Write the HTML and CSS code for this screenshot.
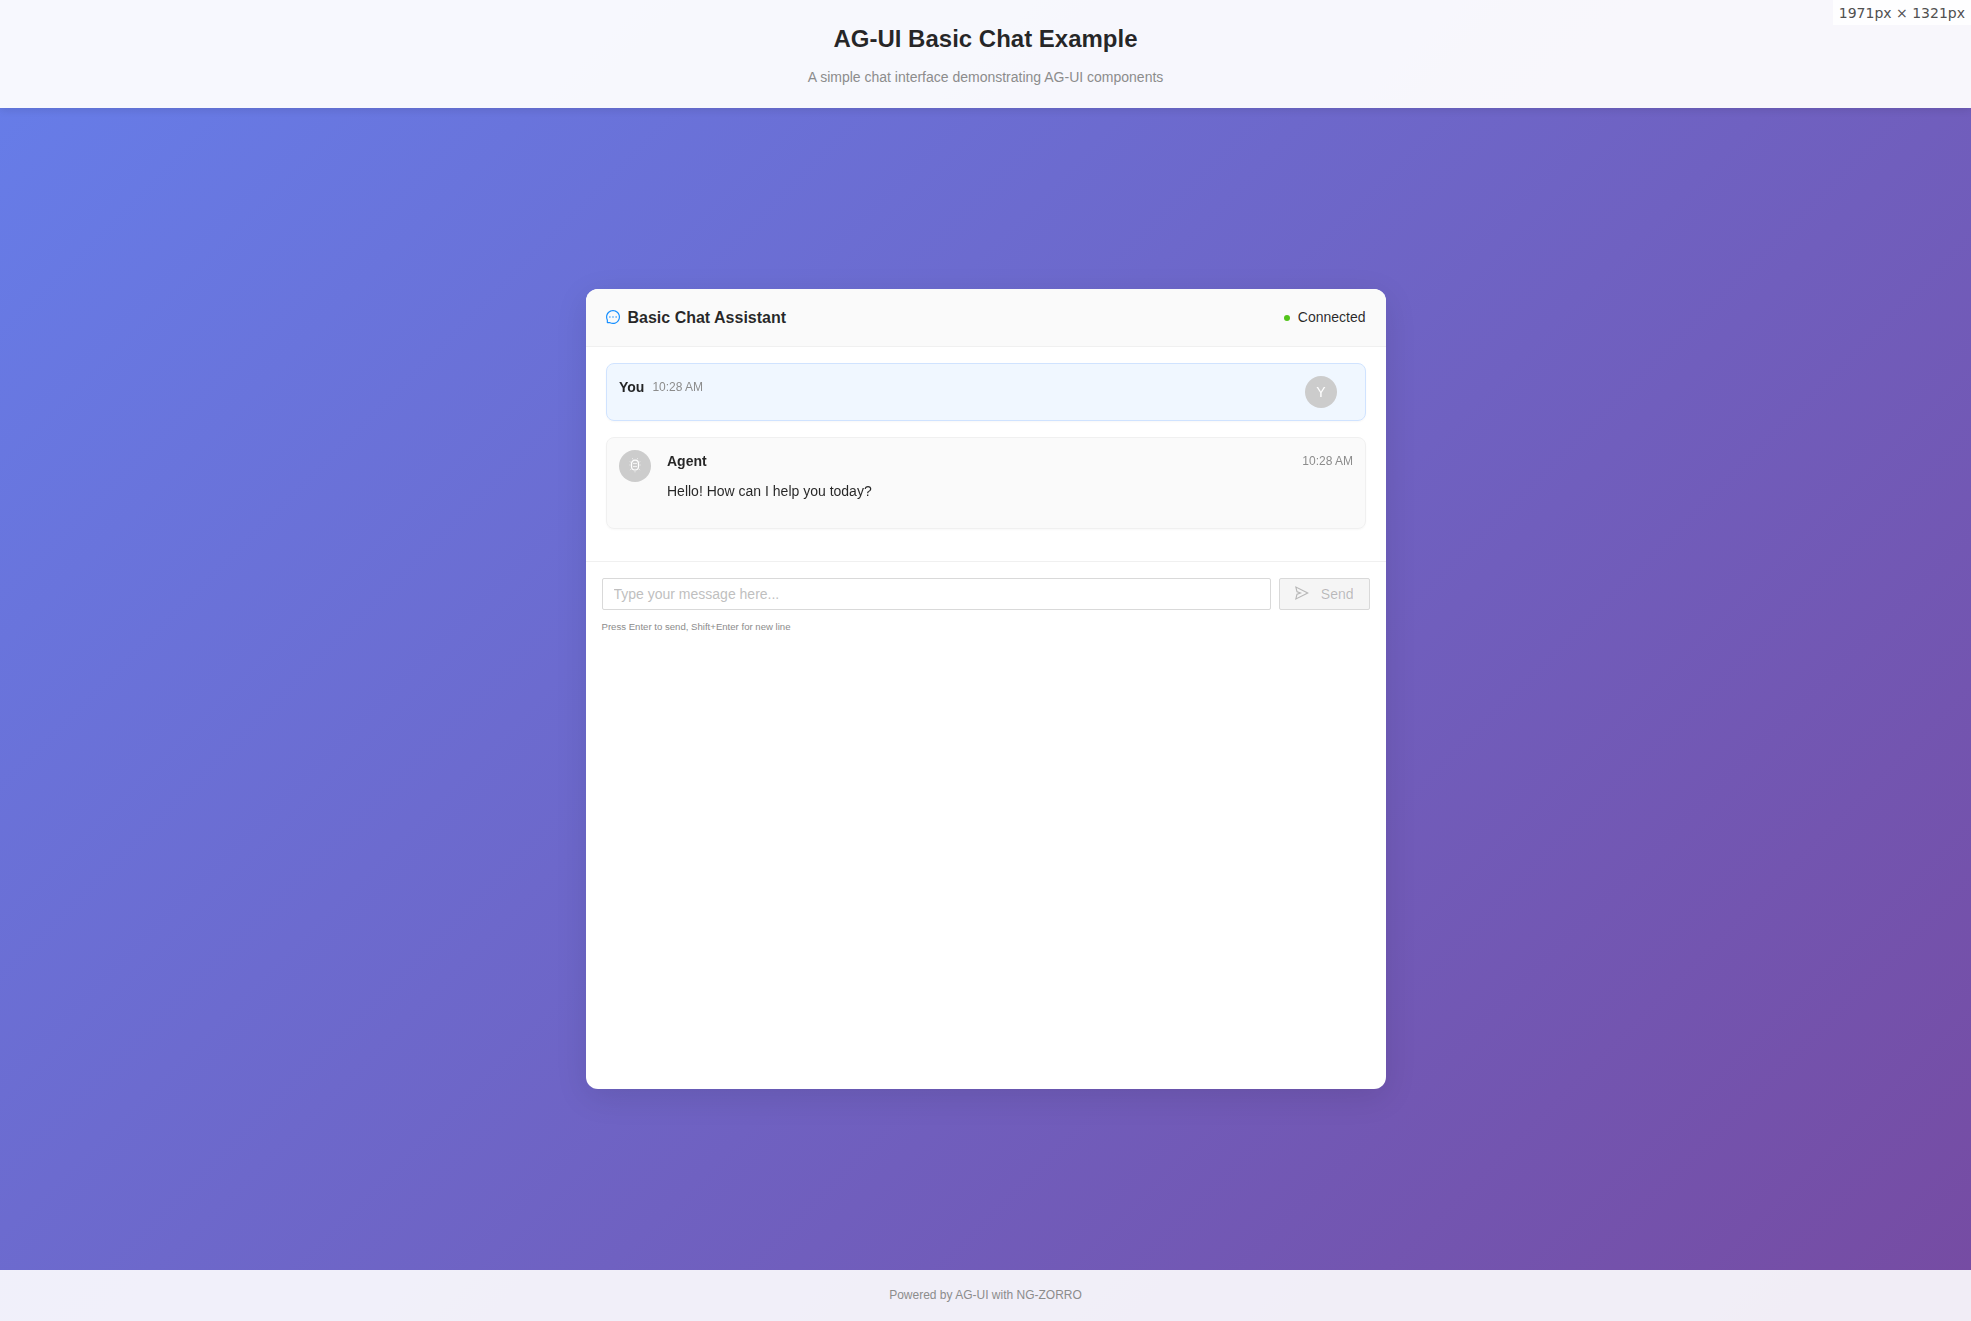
FILE: index.html
```html
<!DOCTYPE html>
<html lang="en">
<head>
<meta charset="utf-8">
<title>AG-UI Basic Chat Example</title>
<link rel="stylesheet" href="styles.css">
</head>
<body>
<div class="app">
  <header class="app-header">
    <h1>AG-UI Basic Chat Example</h1>
    <p>A simple chat interface demonstrating AG-UI components</p>
  </header>
  <main class="app-main">
    <section class="card">
      <div class="card-header">
        <h2 class="card-title">
          <svg class="icon-message" viewBox="64 64 896 896" fill="currentColor"><path d="M464 512a48 48 0 1096 0 48 48 0 10-96 0zm200 0a48 48 0 1096 0 48 48 0 10-96 0zm-400 0a48 48 0 1096 0 48 48 0 10-96 0zm661.2-173.6c-22.6-53.7-55-101.9-96.3-143.3a444.35 444.35 0 00-143.3-96.3C630.6 75.7 572.2 64 512 64h-2c-60.6.3-119.3 12.3-174.5 35.9a445.35 445.35 0 00-142 96.5c-40.9 41.3-73 89.3-95.2 142.8-23 55.4-34.6 114.3-34.3 174.9A449.4 449.4 0 00112 714v152a46 46 0 0046 46h152.1A449.4 449.4 0 00510 960h2.1c59.9 0 118-11.6 172.7-34.3a444.48 444.48 0 00142.8-95.2c41.3-40.9 73.8-88.7 96.5-142 23.6-55.2 35.6-113.9 35.9-174.5.3-60.9-11.5-120-34.8-175.6zm-151.1 438C704 845.8 611 884 512 884h-1.7c-60.3-.3-120.2-15.3-173.1-43.5l-8.4-4.5H188V695.2l-4.5-8.4C155.3 633.9 140.3 574 140 513.7c-.4-99.7 37.7-193.3 107.6-263.8 69.8-70.5 163.1-109.5 262.8-109.9h1.7c50 0 98.5 9.7 144.2 28.9 44.6 18.7 84.6 45.6 119 80 34.3 34.3 61.3 74.4 80 119 19.4 46.2 29.1 95.2 28.9 145.8-.6 99.6-39.7 192.9-110.1 262.7z"/></svg>
          <span>Basic Chat Assistant</span>
        </h2>
        <div class="status"><span class="status-dot"></span><span>Connected</span></div>
      </div>
      <div class="messages">
        <article class="message message-user">
          <div class="message-meta"><strong>You</strong><time>10:28 AM</time></div>
          <div class="avatar">Y</div>
        </article>
        <article class="message message-agent">
          <div class="avatar">
            <svg class="icon-agent" viewBox="0 0 16 16" fill="none" stroke="currentColor">
              <rect x="4.5" y="3.2" width="7" height="9.8" rx="3.5" stroke-width="1.2"/>
              <path d="M6 6.5h4M6 9.5h4" stroke-width=".8" opacity=".9"/>
              <path d="M6 2.4 5.2 1M10 2.4l.8-1.4M3.8 5.2 2.6 4.6M12.2 5.2l1.2-.6M3.6 8H2.2M12.4 8h1.4M4 12l-1 1.2M12 12l1 1.2M8 14v1.4" stroke-width=".8" opacity=".65"/>
            </svg>
          </div>
          <div class="message-body">
            <div class="message-meta"><strong>Agent</strong><time>10:28 AM</time></div>
            <p>Hello! How can I help you today?</p>
          </div>
        </article>
      </div>
      <div class="composer">
        <div class="composer-row">
          <input class="composer-input" type="text" placeholder="Type your message here...">
          <button class="send" disabled>
            <svg class="icon-send" viewBox="64 64 896 896" fill="currentColor"><path d="M931.4 498.9L94.9 79.5c-3.4-1.7-7.3-2.1-11-1.2a15.99 15.99 0 00-11.7 19.3l86.2 352.2c1.3 5.3 5.2 9.6 10.4 11.3l147.7 50.7-147.6 50.7c-5.2 1.8-9.1 6-10.3 11.3L72.2 926.5c-.9 3.7-.5 7.6 1.2 10.9 3.9 7.9 13.5 11.1 21.5 7.2l836.5-417c3.1-1.5 5.6-4.1 7.2-7.1 3.9-8 .7-17.6-7.2-21.6zM170.8 826.3l50.3-205.6 295.2-101.3c2.3-.8 4.2-2.6 5-5 1.4-4.2-.8-8.7-5-10.2L221.1 403 171 198.2l628 314.9-628.2 313.2z"/></svg>
            <span>Send</span>
          </button>
        </div>
        <div class="hint">Press Enter to send, Shift+Enter for new line</div>
      </div>
    </section>
  </main>
  <footer class="app-footer">Powered by AG-UI with NG-ZORRO</footer>
</div>
<div class="size-badge">1971px × 1321px</div>
</body>
</html>
```
FILE: styles.css
```css
* { box-sizing: border-box; }
body {
  margin: 0;
  font: 14px/1.5715 "Liberation Sans", Arial, sans-serif;
  color: rgba(0, 0, 0, .85);
}
h1, h2, p { margin: 0; }
.app {
  min-height: 100vh;
  display: flex;
  flex-direction: column;
  background: linear-gradient(135deg, #667eea 0%, #764ba2 100%);
}
.app-header {
  padding: 20px;
  text-align: center;
  background: rgba(255, 255, 255, .95);
  box-shadow: 0 2px 8px rgba(0, 0, 0, .1);
}
.app-header h1 { font-size: 24px; font-weight: 600; margin-bottom: 8px; }
.app-header p { color: #8c8c8c; }
.app-main { flex: 1; display: flex; align-items: center; justify-content: center; }
.card {
  width: 800px;
  height: 800px;
  border-radius: 12px;
  overflow: hidden;
  background: #fff;
  box-shadow: 0 8px 32px rgba(0, 0, 0, .1);
}
.card-header {
  display: flex;
  align-items: center;
  justify-content: space-between;
  padding: 16px 20px;
  background: #fafafa;
  border-bottom: 1px solid #f0f0f0;
}
.card-title { display: flex; align-items: center; gap: 8px; font-size: 16px; font-weight: 600; }
.icon-message { width: 14px; height: 14px; color: #1890ff; }
.status { display: flex; align-items: center; gap: 8px; }
.status-dot { width: 6px; height: 6px; border-radius: 50%; background: #52c41a; margin-top: 2px; }
.messages { padding: 16px 20px; }
.message {
  display: flex;
  padding: 12px;
  margin-bottom: 16px;
  border: 1px solid #f0f0f0;
  border-radius: 8px;
  background: #fafafa;
  box-shadow: 0 1px 2px rgba(0, 0, 0, .03);
  will-change: transform;
}
.message-user {
  justify-content: space-between;
  background: #f0f7ff;
  border-color: #d0e3ff;
}
.message-user .avatar { margin-right: 16px; }
.message-agent { gap: 16px; min-height: 92px; }
.message-body { flex: 1; }
.message-meta { display: flex; align-items: center; gap: 8px; height: 22px; }
.message-agent .message-meta { justify-content: space-between; margin-bottom: 8px; }
.message-meta strong { font-weight: 600; }
.message-meta time { font-size: 12px; color: #8c8c8c; }
.avatar {
  width: 32px;
  height: 32px;
  border-radius: 50%;
  display: flex;
  align-items: center;
  justify-content: center;
  background: #ccc;
  color: #fff;
}
.icon-agent { width: 16px; height: 16px; margin-bottom: 2px; }
.composer { padding: 16px; border-top: 1px solid #f0f0f0; }
.composer-row { display: flex; gap: 8px; }
.composer-input {
  flex: 1;
  height: 32px;
  padding: 4px 11px;
  border: 1px solid #d9d9d9;
  border-radius: 2px;
  font: inherit;
}
.composer-input::placeholder { color: #bfbfbf; }
.send {
  display: flex;
  align-items: center;
  gap: 12px;
  height: 32px;
  padding: 0 15px;
  border: 1px solid #d9d9d9;
  border-radius: 2px;
  background: #f5f5f5;
  color: rgba(0, 0, 0, .25);
  font: inherit;
}
.icon-send { width: 14px; height: 14px; margin-bottom: 2px; }
.hint { margin-top: 8px; font-size: 9.6px; line-height: 17px; color: #8c8c8c; }
.app-footer {
  padding: 16px;
  text-align: center;
  font-size: 12px;
  color: #8c8c8c;
  background: rgba(255, 255, 255, .9);
}
.size-badge {
  position: absolute;
  top: 0;
  right: 0;
  padding: 5px 6px 3px;
  font: 14px/17px "DejaVu Sans", sans-serif;
  color: #505050;
  background: rgba(255, 255, 255, .8);
}
```
